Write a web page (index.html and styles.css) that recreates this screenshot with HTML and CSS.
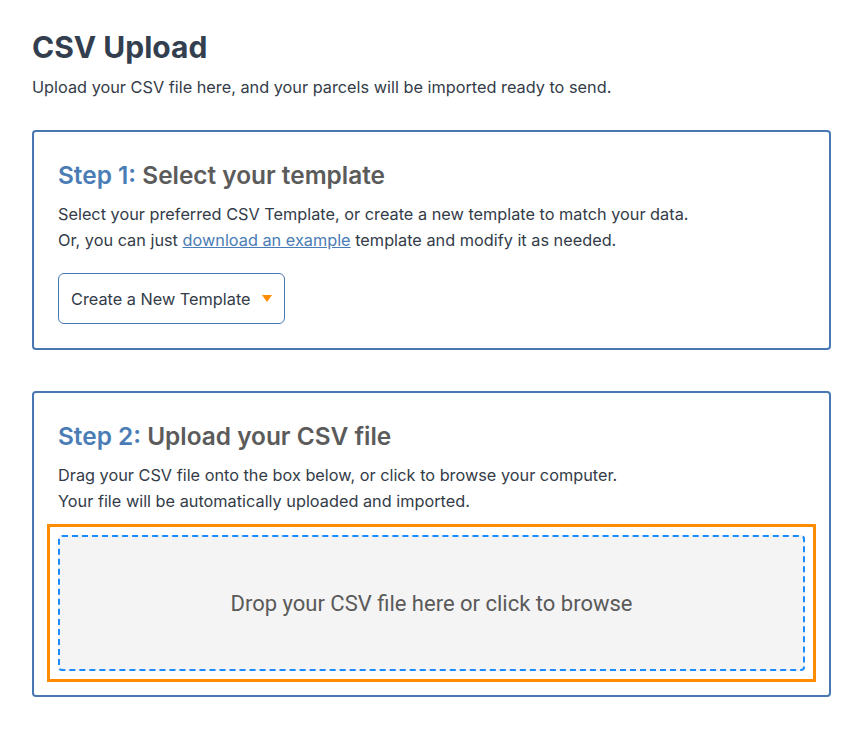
FILE: index.html
```html
<!DOCTYPE html>
<html lang="en">
<head>
  <meta charset="UTF-8">
  <title>CSV Upload</title>
  <link rel="stylesheet" href="styles.css">
</head>
<body>
  <div class="pagina">
    <h1 class="titulo">CSV Upload</h1>
    <p class="subtitulo">Upload your CSV file here, and your parcels will be imported ready to send.</p>

    <div class="paso">
      <h2><span class="num">Step 1:</span> Select your template</h2>
      <p>Select your preferred CSV Template, or create a new template to match your data.<br>
      Or, you can just <a href="#">download an example</a> template and modify it as needed.</p>
      <button class="plantilla">Create a New Template <span class="flecha"></span></button>
    </div>

    <div class="paso">
      <h2><span class="num">Step 2:</span> Upload your CSV file</h2>
      <p>Drag your CSV file onto the box below, or click to browse your computer.<br>
      Your file will be automatically uploaded and imported.</p>
      <div class="zona" tabindex="0">Drop your CSV file here or click to browse</div>
    </div>
  </div>
</body>
</html>
```

FILE: styles.css
```css
body {
  margin: 0;
  font-family: 'Inter', 'Noto Sans', sans-serif;
  background-color: #ffffff;
  color: #333c48;
}

.pagina {
  padding: 29px 37px 40px 32px;
}

.titulo {
  margin: 0;
  font-size: 30px;
  font-weight: 700;
  line-height: 36px;
  color: #333f4f;
}

.subtitulo {
  margin: 10px 0 0 0;
  font-size: 16.3px;
  line-height: 24px;
  color: #333c48;
}

.paso {
  margin-top: 31px;
  border: 2px solid #4778b2;
  border-radius: 4px;
  padding: 24px;
}

.paso + .paso {
  margin-top: 41px;
}

.paso h2 {
  margin: 4px 0 12px 0;
  font-size: 24.4px;
  font-weight: 600;
  line-height: 30px;
  color: #5b5b5b;
}

.paso h2 .num {
  color: #4a7cb5;
}

.paso p {
  margin: 0;
  font-size: 16.3px;
  line-height: 25.5px;
  color: #333c48;
}

.paso + .paso p {
  margin-top: 1px;
}

.paso a {
  color: #4a7cb5;
}

.plantilla {
  margin-top: 20px;
  display: flex;
  align-items: center;
  gap: 11px;
  height: 51px;
  padding: 0 12px;
  border: 1px solid #4778b2;
  border-radius: 6px;
  background-color: #ffffff;
  font-family: 'Inter', 'Noto Sans', sans-serif;
  font-size: 16.3px;
  color: #333c48;
  cursor: pointer;
}

.flecha {
  width: 0;
  height: 0;
  border-left: 5px solid transparent;
  border-right: 5px solid transparent;
  border-top: 7px solid #ff8c00;
}

.zona {
  position: relative;
  margin-top: 21px;
  height: 132px;
  display: flex;
  justify-content: center;
  align-items: center;
  border: 2px dashed #1a8cff;
  border-radius: 4px;
  background-color: #f4f4f4;
  font-family: 'Roboto', 'Liberation Sans', sans-serif;
  font-size: 22px;
  color: #5a5a5a;
  cursor: pointer;
}

/* anillo de foco */
.zona::after {
  content: '';
  position: absolute;
  inset: -13px;
  border: 3px solid #ff8c00;
  pointer-events: none;
}
```
